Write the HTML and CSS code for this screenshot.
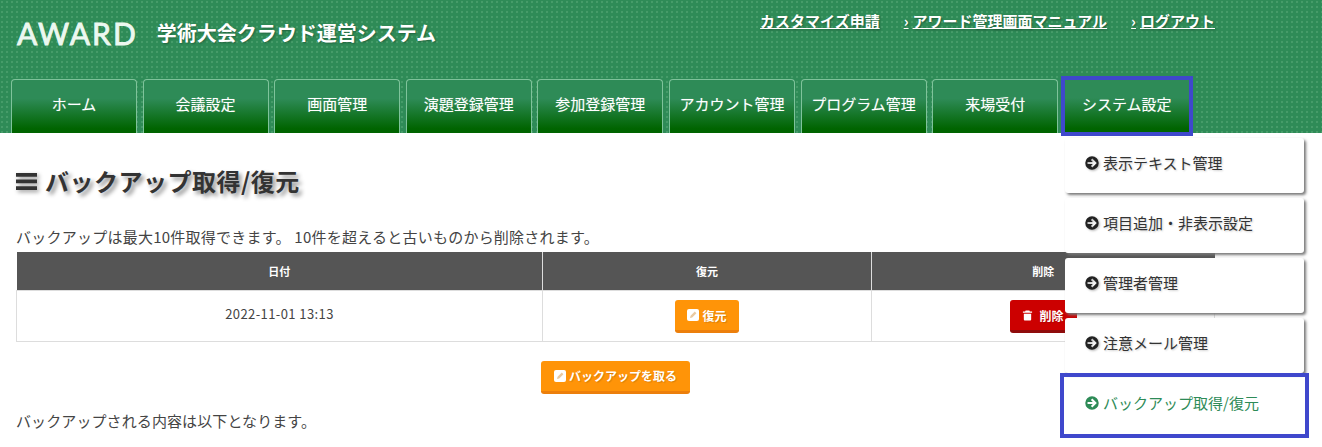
FILE: index.html
```html
<!DOCTYPE html>
<html lang="ja">
<head>
<meta charset="utf-8">
<title>バックアップ取得/復元</title>
<link rel="stylesheet" href="styles.css">
</head>
<body>
<svg class="defs" width="0" height="0" aria-hidden="true">
  <symbol id="arrow" viewBox="0 0 16 16"><path d="M8 .3a7.7 7.7 0 1 0 0 15.4A7.7 7.7 0 0 0 8 .3zM8.4 2.9L13.5 8l-5.1 5.1-1.7-1.7 2.2-2.2H2.9V6.800h6L6.700 4.600z" fill-rule="evenodd"/></symbol>
  <symbol id="edit" viewBox="0 0 12 12"><rect width="12" height="12" rx="2" fill="#fff"/><path d="M3 9l.6-2.200L7.800 2.600l1.600 1.600L5.200 8.400z" fill="#e9c9a0"/></symbol>
</svg>
<header class="site-header">
  <div class="top-row">
    <div class="brand">
      <span class="logo">AWARD</span>
      <span class="system-name">学術大会クラウド運営システム</span>
    </div>
    <nav class="top-links">
      <a href="#">カスタマイズ申請</a>
      <a href="#"><span class="chev">›</span>アワード管理画面マニュアル</a>
      <a href="#"><span class="chev">›</span>ログアウト</a>
    </nav>
  </div>
  <nav class="tabs">
    <a class="tab" href="#">ホーム</a>
    <a class="tab" href="#">会議設定</a>
    <a class="tab" href="#">画面管理</a>
    <a class="tab" href="#">演題登録管理</a>
    <a class="tab" href="#">参加登録管理</a>
    <a class="tab" href="#">アカウント管理</a>
    <a class="tab" href="#">プログラム管理</a>
    <a class="tab" href="#">来場受付</a>
    <a class="tab tab-active" href="#">システム設定</a>
  </nav>
</header>

<ul class="dropdown">
  <li class="drop-item"><svg class="arrow-icon"><use href="#arrow"/></svg>表示テキスト管理</li>
  <li class="drop-item"><svg class="arrow-icon"><use href="#arrow"/></svg>項目追加・非表示設定</li>
  <li class="drop-item"><svg class="arrow-icon"><use href="#arrow"/></svg>管理者管理</li>
  <li class="drop-item"><svg class="arrow-icon"><use href="#arrow"/></svg>注意メール管理</li>
  <li class="drop-item drop-current"><svg class="arrow-icon"><use href="#arrow"/></svg>バックアップ取得/復元</li>
</ul>

<main class="content">
  <h1 class="page-title">
    <svg class="bars-icon" viewBox="0 0 20 16"><path d="M0 0h20v3.500H0zM0 6.200h20v3.500H0zM0 12.500h20V16H0z"/></svg>バックアップ取得/復元
  </h1>
  <p class="lead">バックアップは最大10件取得できます。 10件を超えると古いものから削除されます。</p>
  <table class="backup-table">
    <thead>
      <tr><th class="col-date">日付</th><th class="col-restore">復元</th><th>削除</th></tr>
    </thead>
    <tbody>
      <tr>
        <td class="date-cell">2022-11-01 13:13</td>
        <td class="btn-cell"><a class="btn btn-orange" href="#"><svg class="edit-icon"><use href="#edit"/></svg>復元</a></td>
        <td class="btn-cell"><a class="btn btn-red" href="#"><svg class="trash-icon" viewBox="0 0 12 12"><path d="M4 1h4l.6 1.200H11v1.300H1V2.200h2.400zM2 4.500h8V11a1 1 0 0 1-1 1H3a1 1 0 0 1-1-1z"/></svg>削除</a></td>
      </tr>
    </tbody>
  </table>
  <div class="actions">
    <a class="btn btn-orange btn-wide" href="#"><svg class="edit-icon"><use href="#edit"/></svg>バックアップを取る</a>
  </div>
  <p class="note">バックアップされる内容は以下となります。</p>
</main>
</body>
</html>
```
FILE: styles.css
```css
* { box-sizing: border-box; }
html, body { margin: 0; padding: 0; }
body {
  width: 1322px;
  height: 447px;
  overflow: hidden;
  position: relative;
  background: #fff;
  color: #333;
  font-family: "Noto Sans CJK JP", "Noto Sans", sans-serif;
  font-size: 15px;
}
.defs { position: absolute; }

/* header */
.site-header {
  height: 133px;
  padding: 0 0 0 11px;
  display: flex;
  flex-direction: column;
  justify-content: space-between;
  background-color: #2e8b57;
  background-image: radial-gradient(circle at 2px 2px, rgba(130, 200, 155, .4) 0, rgba(130, 200, 155, .22) 1px, transparent 1.6px);
  background-size: 5px 5px;
}
.top-row {
  display: flex;
  justify-content: space-between;
  align-items: flex-start;
  padding-right: 107px;
}
.brand {
  display: flex;
  align-items: center;
  gap: 19px;
  padding: 18px 0 0 6px;
}
.logo {
  color: #ecf8f0;
  font-family: Lato, "Liberation Sans", sans-serif;
  font-size: 30px;
  font-weight: 400;
  letter-spacing: 2px;
  line-height: 30px;
  -webkit-text-stroke: .9px #ecf8f0;
}
.system-name {
  color: #fff;
  font-size: 20px;
  font-weight: 700;
  line-height: 30px;
  text-shadow: 1px 1px 2px rgba(0, 0, 0, .3);
}
.top-links {
  display: flex;
  gap: 21px;
  padding-top: 10px;
}
.top-links a {
  color: #fff;
  font-size: 15px;
  font-weight: 700;
  line-height: 22px;
  text-decoration: underline;
  text-shadow: 1px 1px 2px rgba(0, 0, 0, .35);
}
.chev { padding: 0 4px 0 3px; }

/* tabs */
.tabs { display: flex; gap: 5.6px; }
.tab {
  width: 126px;
  height: 54px;
  display: flex;
  align-items: center;
  justify-content: center;
  padding-bottom: 6px;
  color: #fff;
  font-size: 15px;
  text-decoration: none;
  white-space: nowrap;
  background: linear-gradient(#2e8b57 0, #2e8b57 35%, #006400 92%);
  border: 1px solid #7fc39b;
  border-bottom: 0;
  border-radius: 4px 4px 0 0;
  text-shadow: 0 0 1px rgba(255, 255, 255, .4);
}
.tab-active {
  border: 0;
  border-radius: 0;
  outline: 4px solid #3f48cc;
  outline-offset: -1px;
}

/* dropdown */
.dropdown {
  position: absolute;
  top: 138px;
  left: 1065px;
  width: 239px;
  margin: 0;
  padding: 0;
  list-style: none;
  display: flex;
  flex-direction: column;
  gap: 5px;
}
.drop-item {
  height: 55px;
  display: flex;
  align-items: center;
  padding: 0 0 6px 20px;
  background: #fff;
  border-radius: 3px;
  box-shadow: 2px 2px 3px #777;
  color: #333;
  font-size: 15px;
  text-shadow: 1px 1px 2px rgba(0, 0, 0, .2);
}
.arrow-icon {
  width: 14px;
  height: 14px;
  margin-right: 4px;
  fill: #222;
  flex: none;
  filter: drop-shadow(1px 1px 1px rgba(0, 0, 0, .3));
}
.drop-current {
  color: #2e8b57;
  text-shadow: none;
  outline: 4px solid #3f48cc;
  outline-offset: 1px;
  border-radius: 0;
  box-shadow: none;
}
.drop-current .arrow-icon { fill: #2e8b57; filter: none; }

/* content */
.content { padding: 28px 107px 0 16px; }
.page-title {
  margin: 0;
  display: flex;
  align-items: center;
  gap: 8px;
  color: #333;
  font-size: 24px;
  font-weight: 700;
  letter-spacing: .5px;
  line-height: 40px;
  text-shadow: 3px 3px 4px rgba(0, 0, 0, .45);
}
.bars-icon {
  width: 21px;
  height: 17px;
  fill: #333;
  filter: drop-shadow(2px 2px 2px rgba(0, 0, 0, .4));
}
.lead {
  margin: 25px 0 0;
  color: #444;
  letter-spacing: .24px;
  line-height: 22px;
}
.backup-table {
  width: 1199px;
  table-layout: fixed;
  border-collapse: collapse;
  margin-top: 4px;
}
.col-date { width: 526px; }
.col-restore { width: 329px; }
.backup-table th {
  height: 38px;
  padding: 0;
  background: #555;
  color: #fff;
  font-size: 11px;
  font-weight: 700;
  border-left: 1px solid #ddd;
}
.backup-table th:first-child { border-left: 0; }
.backup-table td {
  height: 51px;
  padding: 0;
  text-align: center;
  color: #444;
  font-size: 13px;
  border: 1px solid #ddd;
}
.backup-table .date-cell { letter-spacing: .4px; padding-bottom: 4px; }
.backup-table .btn-cell { padding-top: 2px; }
.btn {
  display: inline-flex;
  align-items: center;
  justify-content: center;
  gap: 3px;
  height: 33px;
  width: 64px;
  color: #fff;
  font-size: 12px;
  font-weight: 700;
  text-decoration: none;
  border-radius: 3px;
  vertical-align: middle;
  text-shadow: 1px 1px 1px rgba(0, 0, 0, .15);
}
.btn-orange { background: #ff9408; border-bottom: 3px solid #ec7f0c; }
.btn-red { width: 67px; gap: 6px; background: #cc0000; border-bottom: 3px solid #8f0c0c; }
.btn-wide { width: 149px; }
.edit-icon { width: 12px; height: 12px; flex: none; }
.trash-icon { width: 11px; height: 12px; fill: #fff; flex: none; }
.actions {
  display: flex;
  justify-content: center;
  margin-top: 19px;
}
.note {
  margin: 16px 0 0;
  color: #444;
  letter-spacing: .1px;
  line-height: 22px;
}
```
